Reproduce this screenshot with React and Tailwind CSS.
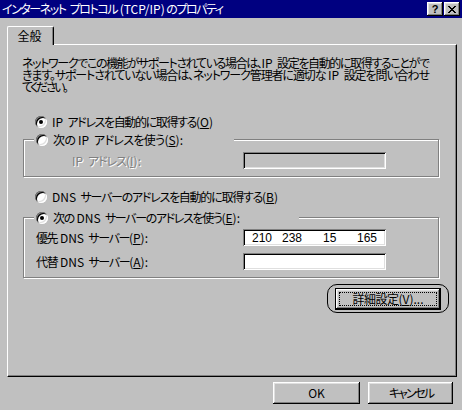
const raised =
  "shadow-[inset_-1px_-1px_0_#000,inset_1px_1px_0_#fff,inset_-2px_-2px_0_#808080,inset_2px_2px_0_#dfdfdf]";
const sunken =
  "shadow-[inset_1px_1px_0_#808080,inset_-1px_-1px_0_#fff,inset_2px_2px_0_#000,inset_-2px_-2px_0_#dfdfdf]";
const etched = "border border-[#808080] shadow-[inset_1px_1px_0_#fff,1px_1px_0_#fff]";

// Latin runs (and the spaces round them) keep their own width; only the kana get squeezed
const L = ({ children }) => <span className="inline-block tracking-normal whitespace-pre">{children}</span>;
const jp = (s) =>
  s
    .split(/(\s*[\x21-\x7e]+\s*|\s+)/)
    .map((p, i) => (i % 2 ? <L key={i}>{p.replace(/ /g, "\u00a0")}</L> : p));

// Squeezes a line into the width the bitmap font took in the original
const Fit = ({ w, className = "", children }) => (
  <span className={`block shrink-0 tracking-[-3px] text-justify [text-align-last:justify] ${w} ${className}`}>
    {children}
  </span>
);

const Radio = ({ checked }) => (
  <span className={`relative flex items-center justify-center w-[12px] h-[12px] rounded-full bg-white shrink-0 ${sunken}`}>
    {checked && <span className="w-[4px] h-[4px] rounded-full bg-black" />}
  </span>
);

const RadioRow = ({ checked, w, children, className = "" }) => (
  <div className={`flex items-center h-[16px] bg-[#c0c0c0] ${className}`}>
    <Radio checked={checked} />
    <Fit w={w} className="ml-[5px]">
      {children}
    </Fit>
  </div>
);

const Field = ({ disabled, children }) => (
  <div
    className={`flex items-center w-[143px] h-[17px] ${sunken} ${disabled ? "bg-[#c0c0c0]" : "bg-white"}`}
  >
    {children}
  </div>
);

const Button = ({ children, className = "" }) => (
  <div className={`flex items-center justify-center bg-[#c0c0c0] ${raised} ${className}`}>{children}</div>
);

export default function App() {
  return (
    <div className="w-[462px] h-[410px] bg-[#c0c0c0] text-black text-[12px] leading-[12px] font-['Noto_Sans_CJK_JP',sans-serif] [font-feature-settings:'palt'] overflow-hidden select-none">
      {/* Title bar */}
      <div className="flex items-center h-[18px] bg-[#000080] pl-[2px] pr-[2px]">
        <Fit w="w-[219px]" className="text-white">
          {jp("インターネット プロトコル (TCP/IP)のプロパティ")}
        </Fit>
        <div className="ml-auto flex">
          <Button className="w-[16px] h-[14px]">
            <span className="font-['Liberation_Sans',sans-serif] font-bold text-[11px] leading-none pt-px">?</span>
          </Button>
          <Button className="w-[16px] h-[14px] ml-[1px]">
            <svg width="8" height="7" viewBox="0 0 8 7" shapeRendering="crispEdges">
              <path d="M0 0h2v1h-2zM6 0h2v1h-2zM1 1h2v1h-2zM5 1h2v1h-2zM2 2h4v1h-4zM3 3h2v1h-2zM2 4h4v1h-4zM1 5h2v1h-2zM5 5h2v1h-2zM0 6h2v1h-2zM6 6h2v1h-2z" fill="#000" />
            </svg>
          </Button>
        </div>
      </div>

      {/* Tab + panel */}
      <div className="pl-[7px] pt-[8px]">
        <div className="relative z-10 -mb-px flex items-center justify-center w-[47px] h-[19px] bg-[#c0c0c0] border-t border-l border-white border-r border-r-black rounded-t-[2px] shadow-[inset_-1px_0_0_#808080] pr-[2px]">
          全般
        </div>
        <div className="w-[450px] h-[333px] border-t border-l border-white border-r border-b border-r-black border-b-black shadow-[inset_-1px_-1px_0_#808080] pl-[15px] pt-[12px]">
          <div className="-ml-px">
            <Fit w="w-[405px]">{jp("ネットワークでこの機能がサポートされている場合は、IP 設定を自動的に取得することがで")}</Fit>
            <Fit w="w-[405px]">{jp("きます。サポートされていない場合は、ネットワーク管理者に適切な IP 設定を問い合わせ")}</Fit>
            <Fit w="w-[44px]">てください。</Fit>
          </div>

          <RadioRow checked w="w-[161px]" className="mt-[21px] ml-[12px] w-max">
            {jp("IP アドレスを自動的に取得する")}
            <L>
              (<u>O</u>)
            </L>
          </RadioRow>

          {/* Manual IP group */}
          <div className={`mt-[9px] w-[416px] ${etched} pb-[7px]`}>
            <RadioRow w="w-[130px]" className="-mt-[8px] ml-[10px] pl-[2px] w-[200px]">
              {jp("次の IP アドレスを使う")}
              <L>
                (<u>S</u>):
              </L>
            </RadioRow>
            <div className="flex items-center mt-[4px] pl-[48px]">
              <span className="w-[171px] text-[#808080] [text-shadow:1px_1px_0_#fff]">
                <Fit w="w-[69px]">
                  {jp("IP アドレス")}
                  <L>
                    (<u>I</u>):
                  </L>
                </Fit>
              </span>
              <Field disabled />
            </div>
          </div>

          <RadioRow w="w-[226px]" className="mt-[12px] ml-[12px] w-max">
            {jp("DNS サーバーのアドレスを自動的に取得する")}
            <L>
              (<u>B</u>)
            </L>
          </RadioRow>

          {/* Manual DNS group */}
          <div className={`mt-[12px] w-[416px] ${etched} pb-[7px]`}>
            <RadioRow checked w="w-[187px]" className="-mt-[8px] ml-[10px] pl-[2px] w-[265px]">
              {jp("次の DNS サーバーのアドレスを使う")}
              <L>
                (<u>E</u>):
              </L>
            </RadioRow>
            <div className="flex items-center mt-[3px] pl-[12px]">
              <span className="w-[207px]">
                <Fit w="w-[112px]">
                  {jp("優先 DNS サーバー")}
                  <L>
                    (<u>P</u>):
                  </L>
                </Fit>
              </span>
              <Field>
                <div className="flex w-full pl-[9px] font-['Liberation_Sans',sans-serif]">
                  <span className="w-[30px]">210</span>
                  <span className="w-[41px]">238</span>
                  <span className="w-[34px]">15</span>
                  <span>165</span>
                </div>
              </Field>
            </div>
            <div className="flex items-center mt-[7px] pl-[12px]">
              <span className="w-[207px]">
                <Fit w="w-[112px]">
                  {jp("代替 DNS サーバー")}
                  <L>
                    (<u>A</u>):
                  </L>
                </Fit>
              </span>
              <Field />
            </div>
          </div>

          {/* Advanced button with highlight ring */}
          <div className="mt-[6px] ml-[304px] w-[122px] h-[29px] border border-black rounded-[10px] flex items-center pl-[7px]">
            <div className="w-[106px] h-[22px] border border-black">
              <Button className="w-full h-full">
                <div className="flex items-center justify-center w-[98px] h-[14px] border border-dotted border-black">
                  <Fit w="w-[71px]">
                    詳細設定
                    <L>
                      (<u>V</u>)...
                    </L>
                  </Fit>
                </div>
              </Button>
            </div>
          </div>
        </div>
      </div>

      {/* Dialog buttons */}
      <div className="flex justify-end gap-[8px] mt-[5px] pr-[9px]">
        <Button className="w-[87px] h-[22px]">OK</Button>
        <Button className="w-[85px] h-[22px]">
          <Fit w="w-[43px]">キャンセル</Fit>
        </Button>
      </div>
    </div>
  );
}
